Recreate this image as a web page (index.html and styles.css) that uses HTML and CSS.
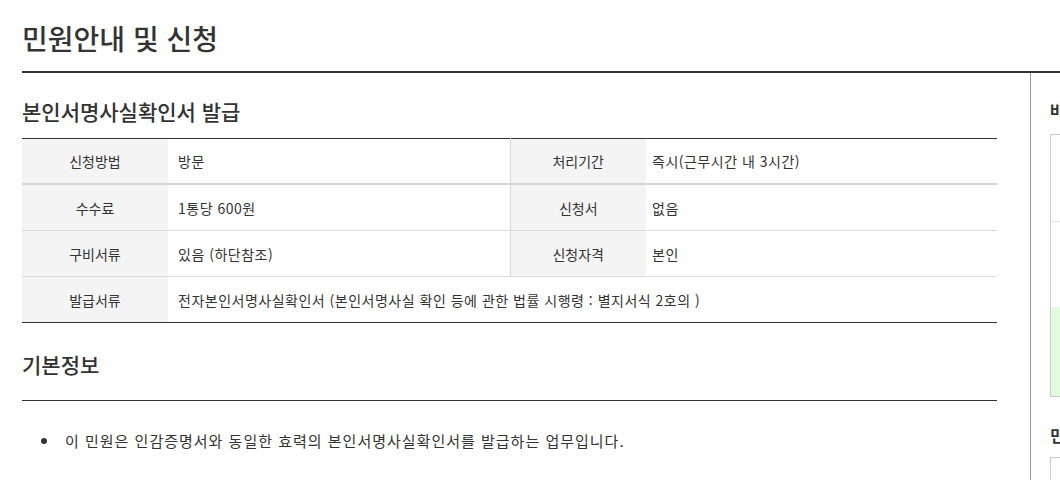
FILE: index.html
```html
<!DOCTYPE html>
<html lang="ko">
<head>
<meta charset="utf-8">
<title>민원안내 및 신청</title>
<link rel="stylesheet" href="styles.css">
</head>
<body>
<div class="page">
  <h1 class="page-title">민원안내 및 신청</h1>
  <div class="layout">
    <main class="main">
      <h2 class="sec-title">본인서명사실확인서 발급</h2>
      <table class="info">
        <colgroup>
          <col class="c-label1"><col class="c-val1"><col class="c-label2"><col class="c-val2">
        </colgroup>
        <tbody>
          <tr class="first">
            <th>신청방법</th><td>방문</td>
            <th class="sep">처리기간</th><td class="v2">즉시(근무시간 내 3시간)</td>
          </tr>
          <tr>
            <th>수수료</th><td>1통당 600원</td>
            <th class="sep">신청서</th><td class="v2">없음</td>
          </tr>
          <tr>
            <th>구비서류</th><td>있음 (하단참조)</td>
            <th class="sep">신청자격</th><td class="v2">본인</td>
          </tr>
          <tr>
            <th>발급서류</th><td colspan="3">전자본인서명사실확인서 (본인서명사실 확인 등에 관한 법률 시행령 : 별지서식 2호의 )</td>
          </tr>
        </tbody>
      </table>
      <h2 class="sec-title sec-basic">기본정보</h2>
      <ul class="bullets">
        <li>이 민원은 인감증명서와 동일한 효력의 본인서명사실확인서를 발급하는 업무입니다.</li>
      </ul>
    </main>
    <aside class="side">
      <h3 class="side-title">바로가기</h3>
      <div class="side-box">
        <div class="side-cell"></div>
        <div class="side-cell c2"></div>
        <div class="side-cell green"></div>
      </div>
      <h3 class="side-title side-title2">민원서식</h3>
      <div class="side-box side-box2"></div>
    </aside>
  </div>
</div>
</body>
</html>
```

FILE: styles.css
```css
html, body {
  margin: 0;
  padding: 0;
  background: #fff;
  overflow: hidden;
}
body {
  font-family: "Noto Sans CJK KR", "Noto Sans", sans-serif;
  color: #333;
  width: 1060px;
  height: 480px;
}
.page {
  padding-left: 22px;
  width: 1400px;
}
.page-title {
  margin: 0;
  height: 73px;
  box-sizing: border-box;
  padding-top: 18px;
  font-size: 28px;
  line-height: 40px;
  font-weight: 500;
  letter-spacing: 0;
  color: #333;
  border-bottom: 2px solid #333;
}
.layout {
  display: flex;
}
.main {
  width: 975px;
  padding-right: 33px;
  flex: none;
}
.sec-title {
  margin: 0;
  padding-top: 21px;
  height: 65px;
  box-sizing: border-box;
  font-size: 21px;
  line-height: 34px;
  font-weight: 500;
  letter-spacing: 0;
  color: #333;
}
.info {
  width: 975px;
  border-collapse: collapse;
  table-layout: fixed;
  border-top: 1px solid #333;
  border-bottom: 1px solid #333;
  font-size: 14px;
}
.c-label1 { width: 146px; }
.c-val1 { width: 342px; }
.c-label2 { width: 136px; }
.c-val2 { width: 351px; }
.info th, .info td {
  height: 45px;
  padding: 0 10px;
  border-bottom: 1px solid #ddd;
  text-align: left;
  font-weight: 400;
  color: #333;
}
.info td {
  letter-spacing: 0.5px;
}
.info td.v2 {
  padding-left: 6px;
}
.info tr.first th, .info tr.first td {
  height: 44px;
  border-bottom: 2px solid #d6d6d6;
}
.info tr:last-child th, .info tr:last-child td {
  border-bottom: 1px solid #333;
}
.info th {
  background: #f4f4f4;
  text-align: center;
}
.info th.sep {
  border-left: 1px solid #d6d6d6;
}
.sec-basic {
  padding-top: 24px;
  height: 78px;
  border-bottom: 1px solid #333;
}
.bullets {
  list-style: none;
  margin: 0;
  padding: 25px 0 0 19px;
  font-size: 15px;
  line-height: 30px;
  letter-spacing: 1px;
  color: #333;
}
.bullets li {
  display: flex;
  align-items: center;
}
.bullets li::before {
  content: "";
  flex: none;
  width: 6px;
  height: 6px;
  border-radius: 50%;
  background: #333;
  margin-right: 18px;
}
.side {
  border-left: 1px solid #999;
  padding-left: 19px;
  width: 300px;
  height: 420px;
}
.side-title {
  margin: 0;
  padding-top: 25px;
  height: 61px;
  box-sizing: border-box;
  font-size: 16px;
  line-height: 24px;
  font-weight: 700;
  color: #333;
}
.side-box {
  border: 1px solid #ccc;
  width: 260px;
}
.side-cell {
  height: 86px;
}
.side-cell.c2 {
  height: 85px;
  border-top: 1px solid #e2e2e2;
}
.side-cell.green {
  background: #e2fadd;
  height: 89px;
}
.side-title2 {
  padding-top: 26px;
  height: 60px;
}
.side-box2 {
  height: 60px;
}
```
